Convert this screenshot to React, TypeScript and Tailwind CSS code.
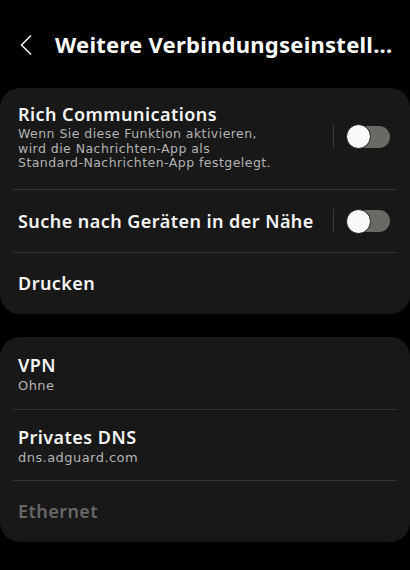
import React from "react";

type ToggleProps = { on?: boolean };

const subFont = { fontFamily: '"DejaVu Sans", "Noto Sans", sans-serif' };

function Toggle({ on = false }: ToggleProps) {
  return (
    <div className="relative h-[22px] w-[43px] shrink-0 rounded-full bg-[#6a6a64]">
      <div
        className={
          "absolute top-[-1.5px] h-[25px] w-[25px] rounded-full border-[1.5px] border-[#1b1b1b] bg-[#fafafa] " +
          (on ? "right-[-1px]" : "left-[-1px]")
        }
      />
    </div>
  );
}

function Divider() {
  return <div className="mx-[13px] h-px bg-[#333333]" />;
}

function SwitchRow({ title, sub, className }: { title: string; sub?: React.ReactNode; className: string }) {
  return (
    <div className={"flex items-center pl-[18px] pr-[20px] " + className}>
      <div className="flex-1 min-w-0">
        <div className="text-[18px] leading-[25px] font-semibold tracking-[0.45px] text-[#f5f5f5]">{title}</div>
        {sub && (
          <div className="text-[12.5px] leading-[14.5px] tracking-[0.45px] text-[#b3b3b3]" style={subFont}>
            {sub}
          </div>
        )}
      </div>
      <div className="mx-[13px] h-[24px] w-px bg-[#3a3a3a]" />
      <Toggle />
    </div>
  );
}

function TextRow({
  title,
  sub,
  disabled,
  className,
}: {
  title: string;
  sub?: string;
  disabled?: boolean;
  className: string;
}) {
  return (
    <div className={"flex flex-col justify-center pl-[18px] " + className}>
      <div
        className={
          "text-[18px] leading-[25px] font-semibold tracking-[0.45px] " +
          (disabled ? "text-[#676767]" : "text-[#f5f5f5]")
        }
      >
        {title}
      </div>
      {sub && (
        <div className="text-[13px] leading-[16px] tracking-[0.45px] text-[#b3b3b3]" style={subFont}>
          {sub}
        </div>
      )}
    </div>
  );
}

export default function App() {
  return (
    <div
      className="h-[570px] w-[410px] overflow-hidden bg-black"
      style={{ fontFamily: '"Noto Sans", Roboto, sans-serif' }}
    >
      <header className="flex h-[88px] items-center">
        <svg width="14" height="22" viewBox="0 0 14 22" className="ml-[19px] mt-[2px]">
          <path d="M12 1.5 L2.5 11 L12 20.5" fill="none" stroke="#f0f0f0" strokeWidth="1.6" />
        </svg>
        <h1 className="ml-[22px] whitespace-nowrap text-[22px] font-bold tracking-[0.25px] text-white">
          Weitere Verbindungseinstell...
        </h1>
      </header>

      <section className="rounded-[20px] bg-[#181818]">
        <SwitchRow
          className="h-[101px] pb-[4px]"
          title="Rich Communications"
          sub={
            <>
              Wenn Sie diese Funktion aktivieren,
              <br />
              wird die Nachrichten-App als
              <br />
              Standard-Nachrichten-App festgelegt.
            </>
          }
        />
        <Divider />
        <SwitchRow className="h-[62px]" title="Suche nach Geräten in der Nähe" />
        <Divider />
        <TextRow className="h-[61px]" title="Drucken" />
      </section>

      <section className="mt-[23px] rounded-[20px] bg-[#181818]">
        <TextRow className="h-[72px]" title="VPN" sub="Ohne" />
        <Divider />
        <TextRow className="h-[70px]" title="Privates DNS" sub="dns.adguard.com" />
        <Divider />
        <TextRow className="h-[61px]" title="Ethernet" disabled />
      </section>
    </div>
  );
}
